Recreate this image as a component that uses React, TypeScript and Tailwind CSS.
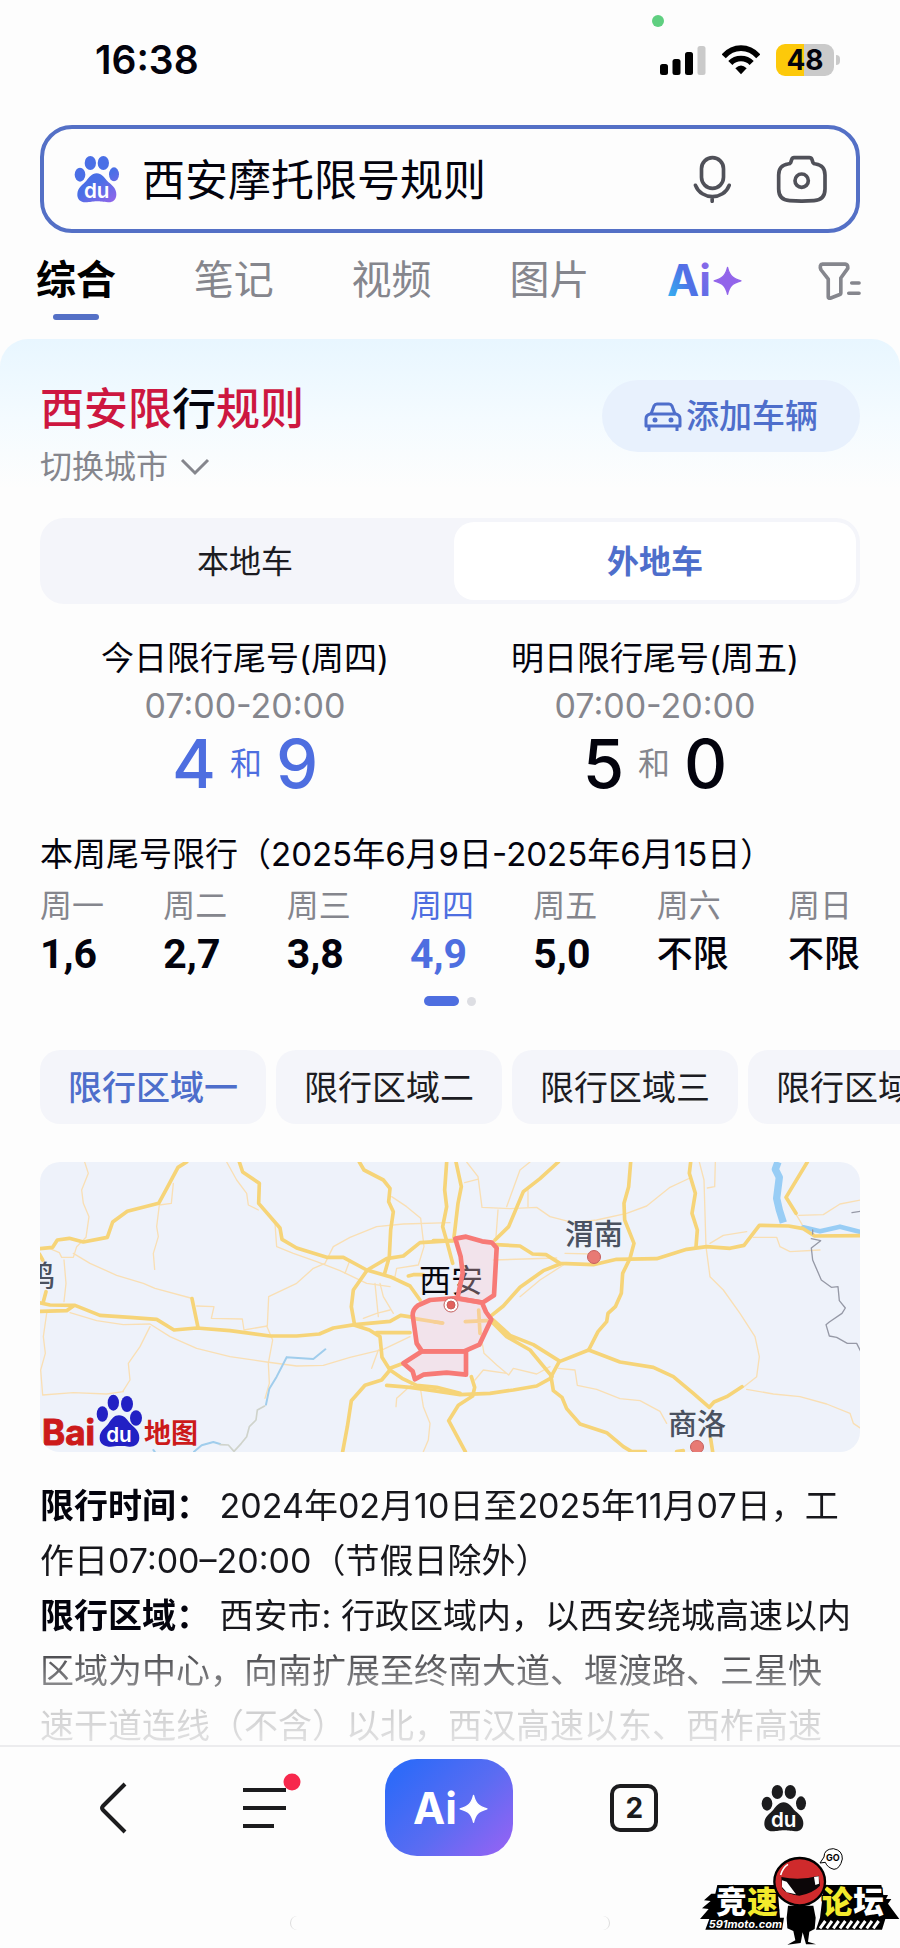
import { useState } from "react";

interface DayLimit {
  day: string;
  limit: string;
}

const week: DayLimit[] = [
  { day: "周一", limit: "1,6" },
  { day: "周二", limit: "2,7" },
  { day: "周三", limit: "3,8" },
  { day: "周四", limit: "4,9" },
  { day: "周五", limit: "5,0" },
  { day: "周六", limit: "不限" },
  { day: "周日", limit: "不限" },
];

const areas = ["限行区域一", "限行区域二", "限行区域三", "限行区域四"];

function PawLogo({ fill, className }: { fill: string; className: string }) {
  return (
    <svg viewBox="164 45 138 144" className={className} aria-hidden="true">
      <defs>
        <linearGradient id="pawGradient" gradientUnits="userSpaceOnUse" x1="190" y1="60" x2="285" y2="190">
          <stop offset="0.5" stopColor="#4a6fe6" />
          <stop offset="1" stopColor="#9565ea" />
        </linearGradient>
      </defs>
      <g fill={fill}>
        <ellipse cx="182" cy="104" rx="16" ry="21" />
        <ellipse cx="213" cy="69" rx="17" ry="21" />
        <ellipse cx="252" cy="69" rx="17" ry="21" />
        <ellipse cx="284" cy="103" rx="15" ry="21" />
        <path d="M232 100C247 100 254 112 263 122C275 134 291 142 291 163C291 180 280 188 266 187C250 186 245 184 232 184C219 184 214 187 198 187C184 187 173 178 174 162C175 142 190 135 201 122C210 112 217 100 232 100Z" />
      </g>
      <text x="232" y="174" textAnchor="middle" fontSize="62" fontWeight="600" fill="#fff">
        du
      </text>
    </svg>
  );
}

function AiMark({ fill, className }: { fill: string; className: string }) {
  return (
    <svg viewBox="204 364 220 112" className={`overflow-visible ${className}`} aria-hidden="true">
      <defs>
        <linearGradient id="aiGradient" gradientUnits="userSpaceOnUse" x1="208" y1="470" x2="360" y2="390">
          <stop offset="0" stopColor="#35b0f0" />
          <stop offset="0.45" stopColor="#4f6fe6" />
          <stop offset="1" stopColor="#9a66ea" />
        </linearGradient>
      </defs>
      <text x="204" y="470" fontSize="132" fontWeight="700" fill={fill}>
        Ai
      </text>
      <path
        d="M389 383C395 408 404 417 430 424C404 431 395 440 389 465C383 440 374 431 348 424C374 417 383 408 389 383Z"
        fill={fill === "#fff" ? fill : "#9264ea"}
        stroke={fill === "#fff" ? fill : "#9264ea"}
        strokeWidth="4"
        strokeLinejoin="round"
      />
    </svg>
  );
}

function StatusBar() {
  return (
    <header className="relative flex h-[125px] items-start justify-between pr-[60px] pl-[95px] pt-9">
      <span className="absolute left-[652px] top-[15px] size-3 rounded-full bg-[#5fcf80]" />
      <time className="text-[39px] font-semibold leading-12">16:38</time>
      <div className="flex items-center gap-4 pt-2">
        <svg viewBox="0 0 46 30" className="h-[30px] w-[46px]" aria-hidden="true">
          <rect x="0" y="19" width="8" height="11" rx="2.5" />
          <rect x="12.500" y="14" width="8" height="16" rx="2.5" />
          <rect x="25" y="7" width="8" height="23" rx="2.5" />
          <rect x="37.500" y="1" width="8" height="29" rx="2.5" fill="#cacaca" />
        </svg>
        <svg viewBox="272 134 114 90" className="h-[30px] w-[38px]" aria-hidden="true">
          <g fill="none" stroke="#000" strokeWidth="17">
            <path d="M277 168C306 135 352 135 381 168" />
            <path d="M297 188C314 170 344 170 361 188" />
          </g>
          <path d="M329 222L312 204Q329 187 346 204Z" />
        </svg>
        <div className="flex items-center gap-0.5">
          <span className="flex h-8 w-[58px] items-center justify-center rounded-[9px] bg-[linear-gradient(90deg,#fdc90a_48%,#cacaca_48%)] text-[28px] font-bold leading-8">
            48
          </span>
          <span className="h-2.5 w-1 rounded-r-full bg-[#cacaca]" />
        </div>
      </div>
    </header>
  );
}

function SearchBox() {
  return (
    <form
      role="search"
      className="mx-10 flex h-[108px] items-center rounded-[32px] border-4 border-[#5470c6] pr-7 pl-[30px]"
      onSubmit={(e) => e.preventDefault()}
    >
      <PawLogo fill="url(#pawGradient)" className="h-12 w-[46px] shrink-0" />
      <input
        aria-label="搜索"
        defaultValue="西安摩托限号规则"
        className="ml-[22px] h-16 min-w-0 flex-1 bg-transparent pt-0.5 text-[43px] outline-none"
      />
      <button type="button" aria-label="语音搜索">
        <svg viewBox="278 46 116 144" className="h-12 w-[39px]" fill="none" stroke="#505159" strokeWidth="11" strokeLinecap="round">
          <rect x="303" y="54" width="66" height="92" rx="33" />
          <path d="M285 137C302 182 370 182 386 137M335 172V185" />
        </svg>
      </button>
      <button type="button" aria-label="拍照搜索" className="ml-11">
        <svg viewBox="532 44 156 144" className="h-12 w-[52px]" fill="none" stroke="#505159" strokeWidth="11" strokeLinejoin="round">
          <path d="M586 52H632Q638 52 640 58L643 67Q645 71 651 71Q679 75 679 104V146Q679 179 646 181Q609 184 573 181Q540 179 540 146V104Q540 75 568 71Q574 71 576 67L579 58Q581 52 586 52Z" />
          <circle cx="609" cy="121" r="20" />
        </svg>
      </button>
    </form>
  );
}

function ChannelTabs() {
  return (
    <nav className="flex h-[106px] items-start justify-between pt-5 pr-[38px] pl-9 text-[40px] leading-[54px] text-[#85868d]">
      <a href="#all" aria-current="page" className="flex flex-col items-center gap-[7px] font-bold text-black">
        综合
        <span className="h-1.5 w-[46px] rounded-full bg-[#5470c6]" />
      </a>
      <a href="#notes">笔记</a>
      <a href="#video">视频</a>
      <a href="#image">图片</a>
      <a href="#ai" aria-label="Ai+" className="pt-2">
        <AiMark fill="url(#aiGradient)" className="h-[37px] w-[72px]" />
      </a>
      <button type="button" aria-label="筛选" className="pt-2">
        <svg viewBox="650 360 136 120" className="h-10 w-[45px]" fill="none" stroke="#85868d" strokeWidth="11" strokeLinecap="round" strokeLinejoin="round">
          <path d="M667 369H735Q743 370 743 378V382L722 411V457Q722 460 719 461L690 472Q684 473 684 468V414L662 386Q656 370 667 369Z" />
          <path d="M755 426H777M746 457H777" />
        </svg>
      </button>
    </nav>
  );
}

function TodayLimit(props: { title: string; first: string; second: string; active?: boolean }) {
  const { title, first, second, active } = props;
  return (
    <div className="flex flex-col items-center">
      <h2 className="text-[33px] leading-12">{title}</h2>
      <p className="text-[34px] leading-12 text-[#85868d]">07:00-20:00</p>
      <p className={`flex items-center gap-3.5 text-[67px] font-medium leading-[68px] ${active ? "text-[#4e6ee0]" : "text-[#03030d]"}`}>
        {first}
        <span className={`text-[32px] font-normal ${active ? "" : "text-[#85868d]"}`}>和</span>
        {second}
      </p>
    </div>
  );
}

function AreaMap() {
  return (
    <svg
      viewBox="0 0 820 290"
      role="img"
      aria-label="西安限行区域地图"
      className="mt-[38px] block w-full rounded-[20px] bg-[#eef2fa]"
    >
      {/* western half */}
      <g transform="translate(-10 -12) scale(.33333)" fill="none" strokeLinejoin="round" strokeLinecap="round">
        <g stroke="#f9dfb4" strokeWidth="4">
          <path d="M162 30L175 70L155 120L160 160L177 200L168 262L140 290L130 322L95 322L88 308L60 296M130 310L180 340L260 376L340 400L375 415L482 444" />
          <path d="M430 100L424 160L388 165L380 230L385 260L370 310L374 358M102 330L108 400L102 455" />
          <path d="M590 36L620 90L650 130L655 165L685 180M735 220L740 290L790 310L860 335L930 362L1010 400L1080 410" />
          <path d="M120 488L200 512L280 524L360 522L420 560L500 595L600 620L710 636L800 648L880 646L960 622L1060 598L1140 560" />
          <path d="M360 530L330 590L295 640L300 690L278 725M50 490L40 560L46 610L32 660L38 735L130 728L230 732L280 725" />
          <path d="M500 468L552 470L544 505L637 507L642 540L712 528L716 440L800 400L850 355L885 340L910 290L960 262L1040 230L1120 222L1260 218" />
          <path d="M710 528L728 570L715 640L718 700L705 745M1085 140L1130 170L1172 205L1182 290L1165 345L1100 355L1095 380L1060 376M945 370L960 330" />
          <path d="M1050 400L1060 440L1090 490M1035 400L1045 500M1150 700L1100 745L1098 770M1172 720L1180 770L1200 820L1195 870L1180 905M1045 600L1025 655M1000 505L1040 490L1080 480" />
        </g>
        <g stroke="#f6d478" strokeWidth="11">
          <path d="M28 296L68 292L82 270L118 265L160 276L232 262L248 216L292 184L386 160L412 112L444 52L470 36" />
          <path d="M628 36L638 66L688 100L686 160L750 234L756 268L800 294L890 322L940 322L1010 360L1080 380L1140 408L1170 450" />
          <path d="M28 458L60 465L135 466L210 496L300 502L380 508L432 540L500 534L600 542L720 558L800 558L868 552L910 534L975 524L1080 514L1112 496L1150 502" />
          <path d="M28 484L110 482L130 468M40 455L48 425M28 312L38 330M486 446L504 532" />
          <path d="M988 36L1002 60L1060 90L1080 115L1076 155L1090 185L1082 240L1078 320L1064 370" />
          <path d="M1270 272L1170 278L1120 318L1070 326L1012 360L970 420L964 470L974 526L1018 540L1050 560L1056 622L1080 660L1116 685L1160 706L1220 712L1290 730" />
          <path d="M1040 548L1140 548M1080 655L1120 640M1080 660L1055 690L1005 706L964 752L952 830L938 905" />
          <path d="M1135 378L1150 374L1180 374M1150 505L1236 519" />
        </g>
        <path d="M770 622L850 627L886 598M770 622L740 680L718 716L708 764M492 905L515 886L550 876L570 882M370 900L374 905" stroke="#a0cdec" strokeWidth="6" />
        <path d="M704 768L682 780L678 810L658 830L650 860L634 880L612 904L595 885L570 884" stroke="#cfd3cb" strokeWidth="5" />
      </g>
      {/* eastern half */}
      <g transform="translate(400 -12) scale(.33333)" fill="none" strokeLinejoin="round" strokeLinecap="round">
        <g stroke="#f9dfb4" strokeWidth="4">
          <path d="M80 36L114 80L126 172L210 176L290 172L330 200L400 218L470 210L560 190L620 168L690 112L750 84M74 98L112 88M174 180L168 260" />
          <path d="M200 170L240 60L270 36M264 120L264 170M778 36L792 90L798 290L810 380L850 420L900 490L945 560L958 620L950 680L910 712" />
          <path d="M802 114L824 110L826 36M810 280L850 256L920 245M940 262L1010 262L1020 290L1050 305L1140 300M1076 196L1150 194L1200 162L1262 150" />
          <path d="M160 330L350 324M375 310L460 312M240 440L300 390L370 345" />
          <path d="M920 718L1000 732L1080 740L1160 762L1230 790L1240 820L1262 835M356 655L405 660L412 706L470 718L540 746L600 752L660 784L680 820" />
          <path d="M120 540L132 610L170 645L206 675L220 655L290 672L330 650M105 690L130 660L200 670M1070 196L1090 230" />
        </g>
        <g stroke="#98cdf5">
          <path d="M1014 36L1006 58L1018 82L1010 145L1018 180L1030 218" strokeWidth="22" strokeLinecap="butt" />
          <path d="M1090 232L1140 244L1200 230L1262 246" strokeWidth="14" />
        </g>
        <g stroke="#f6d478" strokeWidth="11">
          <path d="M20 36L14 120L20 170L8 230L22 280L38 340M48 36L64 110L54 160L42 262" />
          <path d="M355 36L300 86L250 125L206 230L165 270M-20 272L40 272M168 284L240 288L278 312L318 314L360 340L460 344L530 328L650 326L740 298L800 290L870 295L912 286L958 226L1046 228L1090 236L1124 258L1262 257" />
          <path d="M572 36L566 110L552 160L554 210L582 280L570 325L548 370L544 430L526 470L504 490L500 515L474 545L446 600" />
          <path d="M752 36L748 70L766 130L756 190L772 240L768 290M1102 36L1038 142L1068 190" />
          <path d="M155 496L190 468L240 412L310 362L360 342M152 512L200 560L270 600L336 680M160 510L210 556L280 584L360 634L446 600L540 636L640 652L700 680L760 730L808 772L822 756L860 740L906 710" />
          <path d="M-160 706L-90 712L-20 722L60 734L150 730L220 720L290 708L330 686L356 638M334 686L340 722L366 742L380 776L420 822L500 848L550 890L575 905L616 905" />
          <path d="M76 515L140 512M116 480L120 550M-15 516L8 519M94 680L104 712L98 738L55 766L26 812L76 905M710 905L730 902M812 866L818 905" />
        </g>
        <path d="M1118 240V252M1114 266L1142 272L1114 294L1118 330L1144 390L1174 412L1194 410L1198 452L1216 474L1206 490L1168 516L1158 524L1168 558L1190 562L1222 580L1250 580L1262 604M1236 188L1262 184" stroke="#9699a6" strokeWidth="4" />
      </g>

      <g fontSize="29" fill="#4a5160" fontWeight="500">
        <text x="-14" y="125">鸡</text>
        <text x="525" y="83">渭南</text>
        <text x="628" y="273">商洛</text>
      </g>
      <text x="379" y="130" fontSize="32" fill="#05050d">西安</text>

      <g transform="translate(400 -12) scale(.33333)" stroke="#f77a76" strokeWidth="14" fill="#f9c8cf" fillOpacity=".35" strokeLinejoin="round">
        <path d="M46 266L78 260L126 274L156 278L170 294L162 436L128 458L52 446L68 370L62 320Z" />
        <path d="M-30 450L50 444L126 458L138 486L154 508L118 584L72 604L-54 604L-70 580L-82 495Q-82 478 -66 466Z" />
        <path d="M-54 604L78 604V674L20 668L-50 674L-75 688L-82 664L-110 640Z" />
      </g>
      <g stroke="#c4605e">
        <circle cx="411" cy="143" r="7" fill="#fff" />
        <circle cx="411" cy="143" r="4" fill="#e2605c" />
        <circle cx="554" cy="95" r="6.500" fill="#e87a74" />
        <circle cx="657" cy="285" r="6.500" fill="#e87a74" />
      </g>

      {/* map provider logo */}
      <g fill="#cc1a1a" fontWeight="700">
        <text x="2" y="283" fontSize="35" stroke="#cc1a1a">Bai</text>
        <text x="104" y="281" fontSize="27">地图</text>
      </g>
      <g transform="translate(-10 -12) scale(.33333)" fill="#2220c4">
        <ellipse cx="217" cy="792" rx="17" ry="23" />
        <ellipse cx="250" cy="758" rx="17" ry="24" />
        <ellipse cx="291" cy="762" rx="18" ry="24" />
        <ellipse cx="318" cy="804" rx="18" ry="23" />
        <path d="M267 796C284 796 290 808 300 820C312 832 328 842 328 864C327 884 312 891 298 890C282 888 280 888 268 888C256 888 250 891 236 890C220 888 209 880 209 864C209 842 226 834 236 820C246 806 252 796 267 796Z" />
        <text x="267" y="876" textAnchor="middle" fontSize="62" fontWeight="600" fill="#fff">du</text>
      </g>
    </svg>
  );
}

function ForumBadge() {
  return (
    <svg viewBox="180 225 600 300" role="img" aria-label="竞速论坛" className="absolute right-0 bottom-1 h-[100px] w-[200px]">
      <path d="M232 342H412L420 440H432L426 476H196L208 444H180L206 414L186 412L212 390L192 388L214 368H226Z" />
      <path d="M552 342H724L730 372H744L738 384H754L744 398L778 444H736L726 476H528L540 440Z" />
      <path d="M540 472L556 450M560 472L576 450M580 472L596 450M600 472L616 450M620 472L636 450M640 472L656 450M660 472L676 450M680 472L696 450M700 472L716 450" stroke="#fff" strokeWidth="9" />
      <g fontSize="92" fontWeight="900" stroke="#000" strokeWidth="8" paintOrder="stroke">
        <text x="228" y="426" fill="#fff">竞</text>
        <text x="322" y="426" fill="#f3ea2c">速</text>
        <text x="546" y="426" fill="#f3ea2c">论</text>
        <text x="640" y="426" fill="#fff">坛</text>
      </g>
      <text x="206" y="471" fontSize="33" fontWeight="700" fontStyle="italic" fill="#fff">
        591moto.com
      </text>
      <path d="M444 404H520L527 440L524 474L508 482L504 512L528 520H498L488 484L482 516L442 521L466 508L460 480L442 472L440 440Z" />
      <ellipse cx="479" cy="332" rx="76" ry="71" fill="#cf2a2c" stroke="#000" strokeWidth="7" />
      <path d="M424 318Q480 330 536 314L540 344Q520 366 478 374Q440 372 426 352Z" fill="#0c0608" />
      <path d="M426 328L440 332L468 370L440 364L426 348ZM522 318L536 316L537 338L526 342Z" fill="#fff" />
      <path d="M422 312Q428 290 444 280" fill="none" stroke="#fff" strokeWidth="5" />
      <path d="M540 276L552 258Q552 234 580 233Q608 238 607 264Q600 294 582 295Q562 290 556 274Z" fill="#fff" stroke="#000" strokeWidth="3" />
      <text x="558" y="271" fontSize="27" fontWeight="700">GO</text>
    </svg>
  );
}

function BottomBar() {
  return (
    <footer className="relative border-t-2 border-[#ececee] pt-3">
      <div className="flex items-center justify-between pr-[88px] pl-[85px]">
        <button type="button" aria-label="返回" className="flex w-14 justify-center">
          <svg viewBox="0 0 28 52" className="h-13 w-7" fill="none" stroke="#1c1c1e" strokeWidth="4">
            <path d="M26 2L4 24Q2 26 4 28L26 50" />
          </svg>
        </button>
        <button type="button" aria-label="菜单" className="w-14">
          <svg viewBox="0 0 68 72" className="h-18 w-17" fill="none" stroke="#1c1c1e" strokeWidth="4">
            <path d="M8 18H51M8 36H51M8 54H39" />
            <circle cx="57" cy="10" r="8.500" fill="#f7284c" stroke="none" />
          </svg>
        </button>
        <button type="button" aria-label="Ai+" className="flex h-[97px] w-32 items-center justify-center rounded-[32px] bg-[linear-gradient(135deg,#2f6af8_12%,#5a6cf2_55%,#9a62f4)]">
          <AiMark fill="#fff" className="h-[37px] w-[72px]" />
        </button>
        <button type="button" aria-label="窗口" className="flex w-14 justify-center">
          <span className="flex size-12 items-center justify-center rounded-[10px] border-4 border-[#1c1c1e] text-[28px] font-bold leading-8 text-[#1c1c1e]">
            2
          </span>
        </button>
        <button type="button" aria-label="首页" className="flex w-14 justify-center">
          <PawLogo fill="#1c1c1e" className="h-12 w-[46px]" />
        </button>
      </div>
      <div className="mx-auto mt-[60px] mb-5 h-3.5 w-[320px] rounded-full border-x border-[#dcdcdc]" />
      <ForumBadge />
    </footer>
  );
}

export default function App() {
  const [origin, setOrigin] = useState("外地车");
  const [area, setArea] = useState(0);

  return (
    <div className="flex min-h-screen flex-col overflow-hidden bg-[#fdfdfd] font-[Inter,'Noto_Sans_CJK_SC',sans-serif] text-[#03030d]">
      <StatusBar />
      <SearchBox />
      <ChannelTabs />

      <main className="rounded-t-[28px] bg-[linear-gradient(#e8f6ff,#f4fbff_80px,#fdfdfd_150px)] px-10 pt-10">
        <div className="flex items-start justify-between">
          <div>
            <h1 className="text-[44px] font-medium leading-[60px] text-[#cd1740]">
              西安限<span className="text-[#03030d]">行</span>规则
            </h1>
            <button type="button" className="mt-1 flex items-center gap-3 text-[32px] leading-12 text-[#85868d]">
              切换城市
              <svg viewBox="0 0 30 18" className="h-[18px] w-[30px]" fill="none" stroke="#85868d" strokeWidth="3">
                <path d="M2 2L15 15L28 2" />
              </svg>
            </button>
          </div>
          <button type="button" className="mt-px flex h-[72px] items-center gap-1 rounded-full bg-[#e8f1fd] px-[42px] pt-0.5 text-[33px] font-medium text-[#4e6ecb]">
            <svg viewBox="0 0 38 30" className="h-[30px] w-[38px]" fill="none" stroke="#4e6ecb" strokeWidth="3" strokeLinejoin="round">
              <path d="M7 12L10 4Q11 2 13 2H25Q27 2 28 4L31 12M6 12H32Q36 13 36 17V24H2V17Q2 13 6 12ZM5 24V29M33 24V29" />
              <g fill="#4e6ecb" stroke="none">
                <circle cx="11" cy="18" r="2.500" />
                <circle cx="27" cy="18" r="2.500" />
              </g>
            </svg>
            添加车辆
          </button>
        </div>

        <div role="tablist" className="mt-[27px] grid h-[86px] grid-cols-2 gap-2 rounded-3xl bg-[#f4f5fa] p-1 text-[32px]">
          {["本地车", "外地车"].map((item) => (
            <button
              key={item}
              type="button"
              role="tab"
              aria-selected={origin === item}
              onClick={() => setOrigin(item)}
              className={`rounded-[20px] pt-0.5 ${origin === item ? "bg-white font-bold text-[#4e6ecb]" : "text-[#1c1c22]"}`}
            >
              {item}
            </button>
          ))}
        </div>

        <section className="mt-[30px] grid grid-cols-2">
          <TodayLimit title="今日限行尾号(周四)" first="4" second="9" active />
          <TodayLimit title="明日限行尾号(周五)" first="5" second="0" />
        </section>

        <section className="mt-8">
          <h2 className="text-[33px] leading-12">本周尾号限行（2025年6月9日-2025年6月15日）</h2>
          <ul className="mt-1 flex justify-between">
            {week.map(({ day, limit }) => (
              <li key={day} className={day === "周四" ? "text-[#4e6ee0]" : ""}>
                <p className={`text-[32px] leading-12 ${day === "周四" ? "" : "text-[#85868d]"}`}>{day}</p>
                {limit === "不限" ? (
                  <p className="text-[36px] font-medium leading-12">{limit}</p>
                ) : (
                  <p className="font-[Roboto,sans-serif] text-[41px] font-bold leading-12">{limit}</p>
                )}
              </li>
            ))}
          </ul>
          <div className="mt-[18px] flex items-center justify-center gap-2">
            <span className="h-2.5 w-[35px] rounded-full bg-[#4e6ee0]" />
            <span className="size-[9px] rounded-full bg-[#dddee3]" />
          </div>
        </section>

        <div className="-mr-10 mt-[44px] flex gap-2.5 overflow-hidden">
          {areas.map((name, i) => (
            <button
              key={name}
              type="button"
              onClick={() => setArea(i)}
              className={`h-[74px] shrink-0 rounded-[20px] bg-[#f4f5fa] px-7 text-[34px] ${i === area ? "font-medium text-[#4e6ecb]" : "text-[#1c1c22]"}`}
            >
              {name}
            </button>
          ))}
        </div>

        <AreaMap />

        <p className="mt-[26px] h-[267px] overflow-hidden text-[34px] leading-[55px] whitespace-nowrap text-[#17171c] [mask-image:linear-gradient(#000_150px,rgb(0_0_0/.5)_208px,rgb(0_0_0/.2)_232px,rgb(0_0_0/.12)_264px)]">
          <b className="text-[#03030d]">限行时间：</b> 2024年02月10日至2025年11月07日，工
          <br />
          作日07:00–20:00（节假日除外）
          <br />
          <b className="text-[#03030d]">限行区域：</b> 西安市: 行政区域内，以西安绕城高速以内
          <br />
          区域为中心，向南扩展至终南大道、堰渡路、三星快
          <br />
          速干道连线（不含）以北，西汉高速以东、西柞高速
        </p>
      </main>

      <BottomBar />
    </div>
  );
}
